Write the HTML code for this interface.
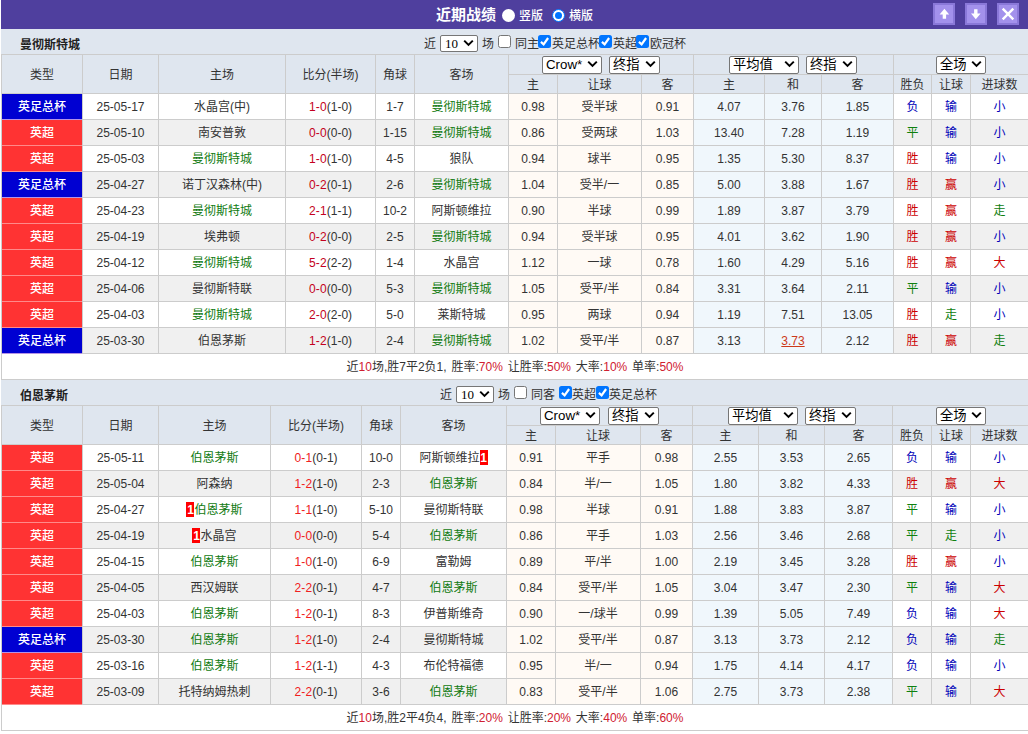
<!DOCTYPE html><html lang="zh-CN"><head><meta charset="utf-8"><title>近期战绩</title><style>
*{box-sizing:border-box;margin:0;padding:0}
html,body{width:1028px;height:734px;overflow:hidden;background:#fff}
body{position:relative;font-family:"Liberation Sans","Noto Sans CJK SC",sans-serif;font-size:12px;color:#333}
.top{position:absolute;left:1px;top:0;width:1027px;height:29px;background:#4f3f9e}
.ttl{position:absolute;left:435px;top:4px;height:22px;line-height:22px;font-weight:700;font-size:15px;color:#fff;white-space:nowrap}
.rd{position:absolute;top:9px;width:13px;height:13px;border-radius:50%;background:#fff}
.rd.on{border:1.5px solid #0075ff;background:#fff}
.rd.on:after{content:"";position:absolute;left:1.5px;top:1.5px;width:7px;height:7px;border-radius:50%;background:#0075ff}
.rt{position:absolute;top:6px;height:20px;line-height:20px;color:#fff;white-space:nowrap;font-weight:500}
.btn{position:absolute;top:3px;width:22px;height:22px;background:#a391ec;border:2px solid #8a78d9}
.btn svg{position:absolute;left:0;top:0}
.sec{position:absolute;left:1px;width:1027px;height:26px;background:#dfe6ef}
.tn{position:absolute;left:19px;top:6px;height:20px;line-height:20px;font-weight:bold;color:#222;white-space:nowrap}
.ft{position:absolute;top:5px;height:20px;line-height:20px;white-space:nowrap;color:#333}
.fs{position:absolute;top:6px}
.cbx{position:absolute;top:6px;width:13px;height:13px;border:1px solid #767676;border-radius:2.5px;background:#fff}
.cbx.on{border:none;background:#0075ff}
.cbx svg{display:block}
.tb{position:absolute;left:1px;width:1027px;display:grid;gap:1px;padding:1px 0 1px 1px;background:#ccc;grid-template-rows:19px 18px repeat(11,25px)}
.h{background:#dfe6ef;text-align:center;white-space:nowrap;color:#333}
.h2{grid-row:span 2;line-height:41px}
.h3{grid-column:span 3;height:19px;gap:7px;display:flex;align-items:center;justify-content:flex-start}
.hb{height:18px;line-height:21px}
.c{background:#fff;text-align:center;white-space:nowrap;color:#333;height:25px;line-height:27px}
.a{background:#f0f0f0}
.o1{background:#fffaf5}
.o2{background:#f0f7fc}
.lg{color:#fff;font-weight:500}
.lg.r{background:#ff3333;box-shadow:0 1px 0 #ff8a8a}
.lg.b{background:#0000d2;box-shadow:0 1px 0 #b493e6}
.g{color:#0f7a0f}
.cr{color:#cc0000}.cb{color:#0000b8}.cg{color:#0f800f}
.s1{color:#c40020}.s2{color:#f02020}.s1,.s2{letter-spacing:.15px}
.sm{grid-column:1/-1;word-spacing:1.5px}
.sm b{font-weight:normal;color:#d02030}
u{color:#cc3a1a}
i{font-style:normal;font-weight:bold;color:#fff;background:#f00;display:inline-block;width:8px;height:15px;line-height:16px;text-align:center;font-size:12px;overflow:hidden;vertical-align:top;margin-top:5px}
.sel{display:inline-block;position:relative;height:18px;background:#fff;border:1px solid #767676;border-radius:2px;vertical-align:middle}
.sel .st{position:absolute;left:3px;top:-1px;line-height:18px;font-size:13.3px;color:#000;white-space:nowrap}
.sel .ar{position:absolute;right:3.5px;top:3.5px}
.sel.s10{height:17px}
.s10 .st{font-family:"Liberation Serif","Noto Serif CJK SC",serif;font-size:13px;left:4px;line-height:17px}
.s10 .ar{top:3px}
</style></head><body>
<div class="top"><span class="ttl">近期战绩</span><span class="rd" style="left:501px"></span><span class="rt" style="left:518px">竖版</span><span class="rd on" style="left:551px"></span><span class="rt" style="left:568px">横版</span>
<span class="btn" style="left:932px"><svg viewBox="2 2 18 18" width="18" height="18"><path d="M11.4 5.7 L16.2 11.6 L13.1 11.6 L13.1 15.8 L9.7 15.8 L9.7 11.6 L6.6 11.6 Z" fill="#fff"/></svg></span><span class="btn" style="left:964px"><svg viewBox="2 2 18 18" width="18" height="18"><path d="M10.8 16.2 L15.6 10.5 L12.5 10.5 L12.5 6.2 L9.1 6.2 L9.1 10.5 L6 10.5 Z" fill="#fff"/></svg></span><span class="btn" style="left:996px"><svg viewBox="2 2 18 18" width="18" height="18"><path d="M5.7 5.7 L16.3 16.3 M16.3 5.7 L5.7 16.3" stroke="#fff" stroke-width="2.4" fill="none"/></svg></span></div>
<div class="sec" style="top:29px"><span class="tn">曼彻斯特城</span>
<span class="ft" style="left:423px">近</span>
<span class="fs" style="left:439px"><span class="sel s10" style="width:38px"><span class="st">10</span><svg class="ar" viewBox="0 0 11 8" width="11" height="8"><path d="M1.2 1.6 L5.5 5.9 L9.8 1.6" fill="none" stroke="#000" stroke-width="2" stroke-linecap="butt" stroke-linejoin="miter"/></svg></span></span>
<span class="ft" style="left:481px">场</span>
<span class="cbx" style="left:497px"></span>
<span class="ft" style="left:514px">同主</span>
<span class="cbx on" style="left:537px"><svg viewBox="0 0 13 13" width="13" height="13"><path d="M2.9 6.9 L5.6 9.3 L10.1 3" fill="none" stroke="#fff" stroke-width="2.2" stroke-linecap="butt" stroke-linejoin="miter"/></svg></span>
<span class="ft" style="left:551px">英足总杯</span>
<span class="cbx on" style="left:598px"><svg viewBox="0 0 13 13" width="13" height="13"><path d="M2.9 6.9 L5.6 9.3 L10.1 3" fill="none" stroke="#fff" stroke-width="2.2" stroke-linecap="butt" stroke-linejoin="miter"/></svg></span>
<span class="ft" style="left:612px">英超</span>
<span class="cbx on" style="left:635px"><svg viewBox="0 0 13 13" width="13" height="13"><path d="M2.9 6.9 L5.6 9.3 L10.1 3" fill="none" stroke="#fff" stroke-width="2.2" stroke-linecap="butt" stroke-linejoin="miter"/></svg></span>
<span class="ft" style="left:649px">欧冠杯</span>
</div>
<div class="tb" style="top:54px;grid-template-columns:80px 75px 126px 89px 38px 93px 48px 83px 51px 70px 56px 71px 37px 38px 57px">
<div class="h h2">类型</div>
<div class="h h2">日期</div>
<div class="h h2">主场</div>
<div class="h h2">比分(半场)</div>
<div class="h h2">角球</div>
<div class="h h2">客场</div>
<div class="h h3" style="padding-left:33px;gap:7px"><span class="sel " style="width:60px"><span class="st">Crow*</span><svg class="ar" viewBox="0 0 11 8" width="11" height="8"><path d="M1.2 1.6 L5.5 5.9 L9.8 1.6" fill="none" stroke="#000" stroke-width="2" stroke-linecap="butt" stroke-linejoin="miter"/></svg></span><span class="sel " style="width:51px"><span class="st">终指</span><svg class="ar" viewBox="0 0 11 8" width="11" height="8"><path d="M1.2 1.6 L5.5 5.9 L9.8 1.6" fill="none" stroke="#000" stroke-width="2" stroke-linecap="butt" stroke-linejoin="miter"/></svg></span></div>
<div class="h h3" style="padding-left:35px"><span class="sel " style="width:70px"><span class="st">平均值</span><svg class="ar" viewBox="0 0 11 8" width="11" height="8"><path d="M1.2 1.6 L5.5 5.9 L9.8 1.6" fill="none" stroke="#000" stroke-width="2" stroke-linecap="butt" stroke-linejoin="miter"/></svg></span><span class="sel " style="width:51px"><span class="st">终指</span><svg class="ar" viewBox="0 0 11 8" width="11" height="8"><path d="M1.2 1.6 L5.5 5.9 L9.8 1.6" fill="none" stroke="#000" stroke-width="2" stroke-linecap="butt" stroke-linejoin="miter"/></svg></span></div>
<div class="h h3" style="padding-left:42px"><span class="sel " style="width:50px"><span class="st">全场</span><svg class="ar" viewBox="0 0 11 8" width="11" height="8"><path d="M1.2 1.6 L5.5 5.9 L9.8 1.6" fill="none" stroke="#000" stroke-width="2" stroke-linecap="butt" stroke-linejoin="miter"/></svg></span></div>
<div class="h hb">主</div>
<div class="h hb">让球</div>
<div class="h hb">客</div>
<div class="h hb">主</div>
<div class="h hb">和</div>
<div class="h hb">客</div>
<div class="h hb">胜负</div>
<div class="h hb">让球</div>
<div class="h hb">进球数</div>
<div class="c lg b">英足总杯</div>
<div class="c">25-05-17</div>
<div class="c">水晶宫(中)</div>
<div class="c"><span class="s1">1-0</span>(1-0)</div>
<div class="c">1-7</div>
<div class="c g">曼彻斯特城</div>
<div class="c o1">0.98</div>
<div class="c o1">受半球</div>
<div class="c o1">0.91</div>
<div class="c o2">4.07</div>
<div class="c o2">3.76</div>
<div class="c o2">1.85</div>
<div class="c cb">负</div>
<div class="c cb">输</div>
<div class="c cb">小</div>
<div class="c lg r">英超</div>
<div class="c a">25-05-10</div>
<div class="c a">南安普敦</div>
<div class="c a"><span class="s1">0-0</span>(0-0)</div>
<div class="c a">1-15</div>
<div class="c a g">曼彻斯特城</div>
<div class="c o1">0.86</div>
<div class="c o1">受两球</div>
<div class="c o1">1.03</div>
<div class="c o2">13.40</div>
<div class="c o2">7.28</div>
<div class="c o2">1.19</div>
<div class="c a cg">平</div>
<div class="c a cb">输</div>
<div class="c a cb">小</div>
<div class="c lg r">英超</div>
<div class="c">25-05-03</div>
<div class="c g">曼彻斯特城</div>
<div class="c"><span class="s1">1-0</span>(1-0)</div>
<div class="c">4-5</div>
<div class="c">狼队</div>
<div class="c o1">0.94</div>
<div class="c o1">球半</div>
<div class="c o1">0.95</div>
<div class="c o2">1.35</div>
<div class="c o2">5.30</div>
<div class="c o2">8.37</div>
<div class="c cr">胜</div>
<div class="c cb">输</div>
<div class="c cb">小</div>
<div class="c lg b">英足总杯</div>
<div class="c a">25-04-27</div>
<div class="c a">诺丁汉森林(中)</div>
<div class="c a"><span class="s1">0-2</span>(0-1)</div>
<div class="c a">2-6</div>
<div class="c a g">曼彻斯特城</div>
<div class="c o1">1.04</div>
<div class="c o1">受半/一</div>
<div class="c o1">0.85</div>
<div class="c o2">5.00</div>
<div class="c o2">3.88</div>
<div class="c o2">1.67</div>
<div class="c a cr">胜</div>
<div class="c a cr">赢</div>
<div class="c a cb">小</div>
<div class="c lg r">英超</div>
<div class="c">25-04-23</div>
<div class="c g">曼彻斯特城</div>
<div class="c"><span class="s1">2-1</span>(1-1)</div>
<div class="c">10-2</div>
<div class="c">阿斯顿维拉</div>
<div class="c o1">0.90</div>
<div class="c o1">半球</div>
<div class="c o1">0.99</div>
<div class="c o2">1.89</div>
<div class="c o2">3.87</div>
<div class="c o2">3.79</div>
<div class="c cr">胜</div>
<div class="c cr">赢</div>
<div class="c cg">走</div>
<div class="c lg r">英超</div>
<div class="c a">25-04-19</div>
<div class="c a">埃弗顿</div>
<div class="c a"><span class="s1">0-2</span>(0-0)</div>
<div class="c a">2-5</div>
<div class="c a g">曼彻斯特城</div>
<div class="c o1">0.94</div>
<div class="c o1">受半球</div>
<div class="c o1">0.95</div>
<div class="c o2">4.01</div>
<div class="c o2">3.62</div>
<div class="c o2">1.90</div>
<div class="c a cr">胜</div>
<div class="c a cr">赢</div>
<div class="c a cb">小</div>
<div class="c lg r">英超</div>
<div class="c">25-04-12</div>
<div class="c g">曼彻斯特城</div>
<div class="c"><span class="s1">5-2</span>(2-2)</div>
<div class="c">1-4</div>
<div class="c">水晶宫</div>
<div class="c o1">1.12</div>
<div class="c o1">一球</div>
<div class="c o1">0.78</div>
<div class="c o2">1.60</div>
<div class="c o2">4.29</div>
<div class="c o2">5.16</div>
<div class="c cr">胜</div>
<div class="c cr">赢</div>
<div class="c cr">大</div>
<div class="c lg r">英超</div>
<div class="c a">25-04-06</div>
<div class="c a">曼彻斯特联</div>
<div class="c a"><span class="s1">0-0</span>(0-0)</div>
<div class="c a">5-3</div>
<div class="c a g">曼彻斯特城</div>
<div class="c o1">1.05</div>
<div class="c o1">受平/半</div>
<div class="c o1">0.84</div>
<div class="c o2">3.31</div>
<div class="c o2">3.64</div>
<div class="c o2">2.11</div>
<div class="c a cg">平</div>
<div class="c a cb">输</div>
<div class="c a cb">小</div>
<div class="c lg r">英超</div>
<div class="c">25-04-03</div>
<div class="c g">曼彻斯特城</div>
<div class="c"><span class="s1">2-0</span>(2-0)</div>
<div class="c">5-0</div>
<div class="c">莱斯特城</div>
<div class="c o1">0.95</div>
<div class="c o1">两球</div>
<div class="c o1">0.94</div>
<div class="c o2">1.19</div>
<div class="c o2">7.51</div>
<div class="c o2">13.05</div>
<div class="c cr">胜</div>
<div class="c cg">走</div>
<div class="c cb">小</div>
<div class="c lg b">英足总杯</div>
<div class="c a">25-03-30</div>
<div class="c a">伯恩茅斯</div>
<div class="c a"><span class="s1">1-2</span>(1-0)</div>
<div class="c a">2-4</div>
<div class="c a g">曼彻斯特城</div>
<div class="c o1">1.02</div>
<div class="c o1">受平/半</div>
<div class="c o1">0.87</div>
<div class="c o2">3.13</div>
<div class="c o2"><u>3.73</u></div>
<div class="c o2">2.12</div>
<div class="c a cr">胜</div>
<div class="c a cr">赢</div>
<div class="c a cg">走</div>
<div class="c sm"><span>近<b>10</b>场,胜7平2负1, 胜率:<b>70%</b> 让胜率:<b>50%</b> 大率:<b>10%</b> 单率:<b>50%</b></span></div>
</div>
<div class="sec" style="top:380px"><span class="tn">伯恩茅斯</span>
<span class="ft" style="left:439px">近</span>
<span class="fs" style="left:455px"><span class="sel s10" style="width:38px"><span class="st">10</span><svg class="ar" viewBox="0 0 11 8" width="11" height="8"><path d="M1.2 1.6 L5.5 5.9 L9.8 1.6" fill="none" stroke="#000" stroke-width="2" stroke-linecap="butt" stroke-linejoin="miter"/></svg></span></span>
<span class="ft" style="left:497px">场</span>
<span class="cbx" style="left:513px"></span>
<span class="ft" style="left:530px">同客</span>
<span class="cbx on" style="left:558px"><svg viewBox="0 0 13 13" width="13" height="13"><path d="M2.9 6.9 L5.6 9.3 L10.1 3" fill="none" stroke="#fff" stroke-width="2.2" stroke-linecap="butt" stroke-linejoin="miter"/></svg></span>
<span class="ft" style="left:571px">英超</span>
<span class="cbx on" style="left:595px"><svg viewBox="0 0 13 13" width="13" height="13"><path d="M2.9 6.9 L5.6 9.3 L10.1 3" fill="none" stroke="#fff" stroke-width="2.2" stroke-linecap="butt" stroke-linejoin="miter"/></svg></span>
<span class="ft" style="left:608px">英足总杯</span>
</div>
<div class="tb" style="top:405px;grid-template-columns:80px 75px 111px 90px 38px 105px 48px 84px 51px 65px 65px 67px 38px 38px 57px">
<div class="h h2">类型</div>
<div class="h h2">日期</div>
<div class="h h2">主场</div>
<div class="h h2">比分(半场)</div>
<div class="h h2">角球</div>
<div class="h h2">客场</div>
<div class="h h3" style="padding-left:33px;gap:8px"><span class="sel " style="width:60px"><span class="st">Crow*</span><svg class="ar" viewBox="0 0 11 8" width="11" height="8"><path d="M1.2 1.6 L5.5 5.9 L9.8 1.6" fill="none" stroke="#000" stroke-width="2" stroke-linecap="butt" stroke-linejoin="miter"/></svg></span><span class="sel " style="width:51px"><span class="st">终指</span><svg class="ar" viewBox="0 0 11 8" width="11" height="8"><path d="M1.2 1.6 L5.5 5.9 L9.8 1.6" fill="none" stroke="#000" stroke-width="2" stroke-linecap="butt" stroke-linejoin="miter"/></svg></span></div>
<div class="h h3" style="padding-left:35px"><span class="sel " style="width:70px"><span class="st">平均值</span><svg class="ar" viewBox="0 0 11 8" width="11" height="8"><path d="M1.2 1.6 L5.5 5.9 L9.8 1.6" fill="none" stroke="#000" stroke-width="2" stroke-linecap="butt" stroke-linejoin="miter"/></svg></span><span class="sel " style="width:51px"><span class="st">终指</span><svg class="ar" viewBox="0 0 11 8" width="11" height="8"><path d="M1.2 1.6 L5.5 5.9 L9.8 1.6" fill="none" stroke="#000" stroke-width="2" stroke-linecap="butt" stroke-linejoin="miter"/></svg></span></div>
<div class="h h3" style="padding-left:43px"><span class="sel " style="width:50px"><span class="st">全场</span><svg class="ar" viewBox="0 0 11 8" width="11" height="8"><path d="M1.2 1.6 L5.5 5.9 L9.8 1.6" fill="none" stroke="#000" stroke-width="2" stroke-linecap="butt" stroke-linejoin="miter"/></svg></span></div>
<div class="h hb">主</div>
<div class="h hb">让球</div>
<div class="h hb">客</div>
<div class="h hb">主</div>
<div class="h hb">和</div>
<div class="h hb">客</div>
<div class="h hb">胜负</div>
<div class="h hb">让球</div>
<div class="h hb">进球数</div>
<div class="c lg r">英超</div>
<div class="c">25-05-11</div>
<div class="c g">伯恩茅斯</div>
<div class="c"><span class="s2">0-1</span>(0-1)</div>
<div class="c">10-0</div>
<div class="c">阿斯顿维拉<i>1</i></div>
<div class="c o1">0.91</div>
<div class="c o1">平手</div>
<div class="c o1">0.98</div>
<div class="c o2">2.55</div>
<div class="c o2">3.53</div>
<div class="c o2">2.65</div>
<div class="c cb">负</div>
<div class="c cb">输</div>
<div class="c cb">小</div>
<div class="c lg r">英超</div>
<div class="c a">25-05-04</div>
<div class="c a">阿森纳</div>
<div class="c a"><span class="s2">1-2</span>(1-0)</div>
<div class="c a">2-3</div>
<div class="c a g">伯恩茅斯</div>
<div class="c o1">0.84</div>
<div class="c o1">半/一</div>
<div class="c o1">1.05</div>
<div class="c o2">1.80</div>
<div class="c o2">3.82</div>
<div class="c o2">4.33</div>
<div class="c a cr">胜</div>
<div class="c a cr">赢</div>
<div class="c a cr">大</div>
<div class="c lg r">英超</div>
<div class="c">25-04-27</div>
<div class="c g"><i>1</i>伯恩茅斯</div>
<div class="c"><span class="s2">1-1</span>(1-0)</div>
<div class="c">5-10</div>
<div class="c">曼彻斯特联</div>
<div class="c o1">0.98</div>
<div class="c o1">半球</div>
<div class="c o1">0.91</div>
<div class="c o2">1.88</div>
<div class="c o2">3.83</div>
<div class="c o2">3.87</div>
<div class="c cg">平</div>
<div class="c cb">输</div>
<div class="c cb">小</div>
<div class="c lg r">英超</div>
<div class="c a">25-04-19</div>
<div class="c a"><i>1</i>水晶宫</div>
<div class="c a"><span class="s2">0-0</span>(0-0)</div>
<div class="c a">5-4</div>
<div class="c a g">伯恩茅斯</div>
<div class="c o1">0.86</div>
<div class="c o1">平手</div>
<div class="c o1">1.03</div>
<div class="c o2">2.56</div>
<div class="c o2">3.46</div>
<div class="c o2">2.68</div>
<div class="c a cg">平</div>
<div class="c a cg">走</div>
<div class="c a cb">小</div>
<div class="c lg r">英超</div>
<div class="c">25-04-15</div>
<div class="c g">伯恩茅斯</div>
<div class="c"><span class="s2">1-0</span>(1-0)</div>
<div class="c">6-9</div>
<div class="c">富勒姆</div>
<div class="c o1">0.89</div>
<div class="c o1">平/半</div>
<div class="c o1">1.00</div>
<div class="c o2">2.19</div>
<div class="c o2">3.45</div>
<div class="c o2">3.28</div>
<div class="c cr">胜</div>
<div class="c cr">赢</div>
<div class="c cb">小</div>
<div class="c lg r">英超</div>
<div class="c a">25-04-05</div>
<div class="c a">西汉姆联</div>
<div class="c a"><span class="s2">2-2</span>(0-1)</div>
<div class="c a">4-7</div>
<div class="c a g">伯恩茅斯</div>
<div class="c o1">0.84</div>
<div class="c o1">受平/半</div>
<div class="c o1">1.05</div>
<div class="c o2">3.04</div>
<div class="c o2">3.47</div>
<div class="c o2">2.30</div>
<div class="c a cg">平</div>
<div class="c a cb">输</div>
<div class="c a cr">大</div>
<div class="c lg r">英超</div>
<div class="c">25-04-03</div>
<div class="c g">伯恩茅斯</div>
<div class="c"><span class="s2">1-2</span>(0-1)</div>
<div class="c">8-3</div>
<div class="c">伊普斯维奇</div>
<div class="c o1">0.90</div>
<div class="c o1">一/球半</div>
<div class="c o1">0.99</div>
<div class="c o2">1.39</div>
<div class="c o2">5.05</div>
<div class="c o2">7.49</div>
<div class="c cb">负</div>
<div class="c cb">输</div>
<div class="c cr">大</div>
<div class="c lg b">英足总杯</div>
<div class="c a">25-03-30</div>
<div class="c a g">伯恩茅斯</div>
<div class="c a"><span class="s2">1-2</span>(1-0)</div>
<div class="c a">2-4</div>
<div class="c a">曼彻斯特城</div>
<div class="c o1">1.02</div>
<div class="c o1">受平/半</div>
<div class="c o1">0.87</div>
<div class="c o2">3.13</div>
<div class="c o2">3.73</div>
<div class="c o2">2.12</div>
<div class="c a cb">负</div>
<div class="c a cb">输</div>
<div class="c a cg">走</div>
<div class="c lg r">英超</div>
<div class="c">25-03-16</div>
<div class="c g">伯恩茅斯</div>
<div class="c"><span class="s2">1-2</span>(1-1)</div>
<div class="c">4-3</div>
<div class="c">布伦特福德</div>
<div class="c o1">0.95</div>
<div class="c o1">半/一</div>
<div class="c o1">0.94</div>
<div class="c o2">1.75</div>
<div class="c o2">4.14</div>
<div class="c o2">4.17</div>
<div class="c cb">负</div>
<div class="c cb">输</div>
<div class="c cb">小</div>
<div class="c lg r">英超</div>
<div class="c a">25-03-09</div>
<div class="c a">托特纳姆热刺</div>
<div class="c a"><span class="s2">2-2</span>(0-1)</div>
<div class="c a">3-6</div>
<div class="c a g">伯恩茅斯</div>
<div class="c o1">0.83</div>
<div class="c o1">受平/半</div>
<div class="c o1">1.06</div>
<div class="c o2">2.75</div>
<div class="c o2">3.73</div>
<div class="c o2">2.38</div>
<div class="c a cg">平</div>
<div class="c a cb">输</div>
<div class="c a cr">大</div>
<div class="c sm"><span>近<b>10</b>场,胜2平4负4, 胜率:<b>20%</b> 让胜率:<b>20%</b> 大率:<b>40%</b> 单率:<b>60%</b></span></div>
</div>
</body></html>
